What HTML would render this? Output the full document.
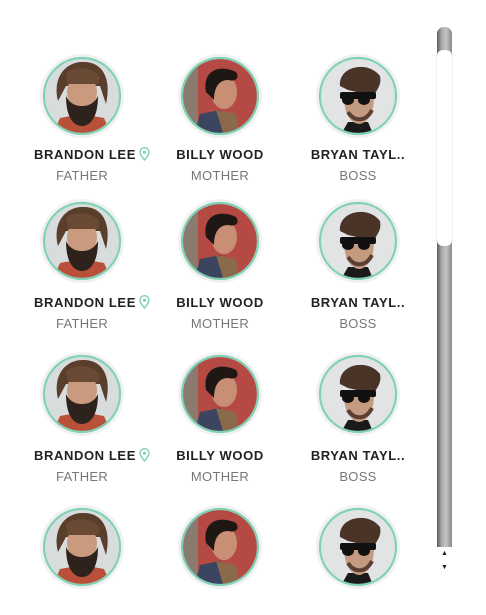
<!DOCTYPE html>
<html><head><meta charset="utf-8"><style>
body{margin:0;width:486px;height:615px;background:#fff;overflow:hidden;font-family:"Liberation Sans",sans-serif;position:relative}
.av{position:absolute;width:84px;height:84px;border-radius:50%;background:#f1f1f1}
.av svg{position:absolute;left:2px;top:2px}
.nm{position:absolute;width:140px;text-align:center;font-weight:bold;font-size:13px;letter-spacing:.6px;color:#222}
.rl{position:absolute;width:140px;text-align:center;font-size:13px;color:#777;letter-spacing:.3px}
.pin{display:inline-block;vertical-align:-2px;margin-left:3px}
.sb{position:absolute;left:437px;top:27px;width:15px;height:551px;border-radius:7px 7px 2px 2px;background:linear-gradient(90deg,#5a5a5a,#a8a8a8 30%,#c4c4c4 60%,#8a8a8a)}
.th{position:absolute;left:437px;top:50px;width:15px;height:196px;border-radius:6px;background:#fff;box-shadow:0 0 1px #999}
.ar{position:absolute;left:437px;top:547px;width:15px;height:31px;background:#fff;font-size:7px;text-align:center;line-height:14px;color:#222}
</style></head><body>
<svg width="0" height="0" style="position:absolute">
<defs>
<clipPath id="c"><circle cx="40" cy="40" r="37"/></clipPath>
<g id="a1"><g clip-path="url(#c)"><rect width="80" height="80" fill="#d9dcdc"/><path d="M10 80 L18 62 L40 58 L62 62 L70 80Z" fill="#b8503a"/><path d="M16 45 C10 20 25 5 42 6 C60 6 70 22 64 48 L58 30 L24 30Z" fill="#5a3e2c"/><ellipse cx="40" cy="36" rx="15" ry="17" fill="#c99a7e"/><path d="M24 40 C24 62 32 70 40 70 C48 70 56 62 56 40 C52 48 46 50 40 50 C34 50 28 48 24 40Z" fill="#2e231c"/><path d="M24 18 C30 10 52 10 58 22 L56 28 L26 28Z" fill="#6a4a34"/></g><circle cx="40" cy="40" r="38" fill="none" stroke="#7fd2b4" stroke-width="2.2"/></g>
<g id="a2"><g clip-path="url(#c)"><rect width="80" height="80" fill="#b54a44"/><rect width="18" height="80" fill="#8a7a70"/><path d="M14 80 L20 58 L40 54 L50 62 L52 80Z" fill="#3c4560"/><path d="M36 54 L44 80 L60 80 L56 58Z" fill="#8a6a4a"/><ellipse cx="44" cy="36" rx="13" ry="17" fill="#c98f74"/><path d="M26 36 C22 14 40 8 56 16 C60 22 56 26 48 24 C40 24 34 30 34 44Z" fill="#1f1714"/></g><circle cx="40" cy="40" r="38" fill="none" stroke="#7fd2b4" stroke-width="2.2"/></g>
<g id="a3"><g clip-path="url(#c)"><rect width="80" height="80" fill="#e2e3e5"/><path d="M22 80 L30 66 L50 66 L56 80Z" fill="#1a1a1a"/><path d="M26 40 C26 60 34 68 42 68 C50 66 56 58 56 40Z" fill="#c49a80"/><path d="M22 30 C20 10 50 4 62 20 C64 30 58 34 56 40 L30 34Z" fill="#4a3428"/><rect x="22" y="36" width="36" height="7" rx="2" fill="#111"/><ellipse cx="30" cy="44" rx="6" ry="5" fill="#111"/><ellipse cx="46" cy="44" rx="6" ry="5" fill="#111"/><path d="M30 56 C36 66 48 66 54 54" fill="none" stroke="#5a4034" stroke-width="4"/></g><circle cx="40" cy="40" r="38" fill="none" stroke="#7fd2b4" stroke-width="2.2"/></g>
</defs></svg>

<!-- rows -->
<div class="av" style="left:40px;top:54px"><svg width="80" height="80"><use href="#a1"/></svg></div>
<div class="av" style="left:178px;top:54px"><svg width="80" height="80"><use href="#a2"/></svg></div>
<div class="av" style="left:316px;top:54px"><svg width="80" height="80"><use href="#a3"/></svg></div>
<div class="nm" style="left:22px;top:147px">BRANDON LEE<svg class="pin" width="11" height="14" viewBox="0 0 11 14"><path d="M5.5 13 C2 8.5 1 7 1 5.2 A4.5 4.5 0 0 1 10 5.2 C10 7 9 8.5 5.5 13Z" fill="none" stroke="#7fd2b4" stroke-width="1.4"/><circle cx="5.5" cy="5.2" r="1.6" fill="#7fd2b4"/></svg></div>
<div class="nm" style="left:150px;top:147px">BILLY WOOD</div>
<div class="nm" style="left:288px;top:147px">BRYAN TAYL..</div>
<div class="rl" style="left:12px;top:168px">FATHER</div>
<div class="rl" style="left:150px;top:168px">MOTHER</div>
<div class="rl" style="left:288px;top:168px">BOSS</div>

<div class="av" style="left:40px;top:199px"><svg width="80" height="80"><use href="#a1"/></svg></div>
<div class="av" style="left:178px;top:199px"><svg width="80" height="80"><use href="#a2"/></svg></div>
<div class="av" style="left:316px;top:199px"><svg width="80" height="80"><use href="#a3"/></svg></div>
<div class="nm" style="left:22px;top:295px">BRANDON LEE<svg class="pin" width="11" height="14" viewBox="0 0 11 14"><path d="M5.5 13 C2 8.5 1 7 1 5.2 A4.5 4.5 0 0 1 10 5.2 C10 7 9 8.5 5.5 13Z" fill="none" stroke="#7fd2b4" stroke-width="1.4"/><circle cx="5.5" cy="5.2" r="1.6" fill="#7fd2b4"/></svg></div>
<div class="nm" style="left:150px;top:295px">BILLY WOOD</div>
<div class="nm" style="left:288px;top:295px">BRYAN TAYL..</div>
<div class="rl" style="left:12px;top:316px">FATHER</div>
<div class="rl" style="left:150px;top:316px">MOTHER</div>
<div class="rl" style="left:288px;top:316px">BOSS</div>

<div class="av" style="left:40px;top:352px"><svg width="80" height="80"><use href="#a1"/></svg></div>
<div class="av" style="left:178px;top:352px"><svg width="80" height="80"><use href="#a2"/></svg></div>
<div class="av" style="left:316px;top:352px"><svg width="80" height="80"><use href="#a3"/></svg></div>
<div class="nm" style="left:22px;top:448px">BRANDON LEE<svg class="pin" width="11" height="14" viewBox="0 0 11 14"><path d="M5.5 13 C2 8.5 1 7 1 5.2 A4.5 4.5 0 0 1 10 5.2 C10 7 9 8.5 5.5 13Z" fill="none" stroke="#7fd2b4" stroke-width="1.4"/><circle cx="5.5" cy="5.2" r="1.6" fill="#7fd2b4"/></svg></div>
<div class="nm" style="left:150px;top:448px">BILLY WOOD</div>
<div class="nm" style="left:288px;top:448px">BRYAN TAYL..</div>
<div class="rl" style="left:12px;top:469px">FATHER</div>
<div class="rl" style="left:150px;top:469px">MOTHER</div>
<div class="rl" style="left:288px;top:469px">BOSS</div>

<div class="av" style="left:40px;top:505px"><svg width="80" height="80"><use href="#a1"/></svg></div>
<div class="av" style="left:178px;top:505px"><svg width="80" height="80"><use href="#a2"/></svg></div>
<div class="av" style="left:316px;top:505px"><svg width="80" height="80"><use href="#a3"/></svg></div>

<div class="sb"></div>
<div class="th"></div>
<div class="ar">▲<br>▼</div>
</body></html>
